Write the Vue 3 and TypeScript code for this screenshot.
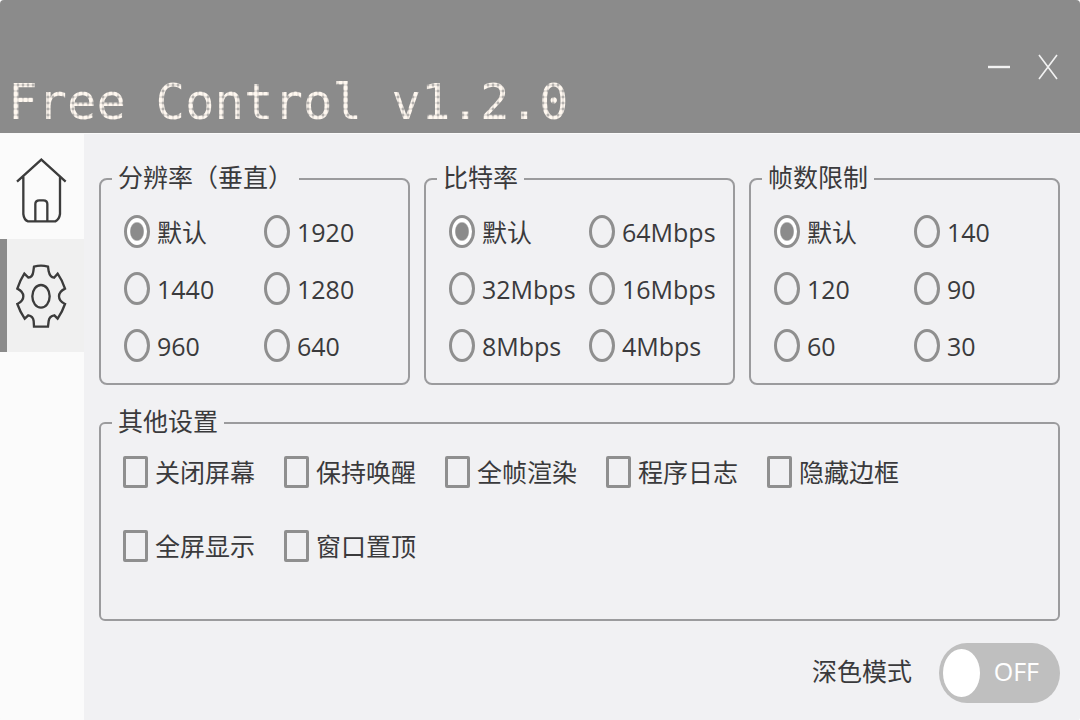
<script setup lang="ts">
import { reactive, ref } from 'vue'

interface Group {
  id: string
  title: string
  options: string[]
}

const groups: Group[] = [
  { id: 'resolution', title: '分辨率（垂直）', options: ['默认', '1920', '1440', '1280', '960', '640'] },
  { id: 'bitrate', title: '比特率', options: ['默认', '64Mbps', '32Mbps', '16Mbps', '8Mbps', '4Mbps'] },
  { id: 'fps', title: '帧数限制', options: ['默认', '140', '120', '90', '60', '30'] },
]
const selected = reactive<Record<string, string>>({ resolution: '默认', bitrate: '默认', fps: '默认' })

const others = ['关闭屏幕', '保持唤醒', '全帧渲染', '程序日志', '隐藏边框', '全屏显示', '窗口置顶']
const enabled = ref<string[]>([])
const dark = ref(false)
</script>

<template>
  <div class="window">
    <header class="titlebar">
      <h1 class="title">Free Control v1.2.0</h1>
      <div class="controls">
        <button type="button" aria-label="最小化">
          <svg width="24" height="28" viewBox="0 0 24 28"><path d="M1 14H23" stroke-width="2.4" /></svg>
        </button>
        <button type="button" aria-label="关闭">
          <svg width="24" height="28" viewBox="0 0 24 28"><path d="M3 2L21 26M21 2L3 26" stroke-width="1.6" /></svg>
        </button>
      </div>
    </header>
    <div class="body">
      <nav class="sidebar">
        <button type="button" class="nav home" aria-label="主页">
          <svg width="52" height="67" viewBox="45 65 156 201">
            <path d="M51 139L124 73L197 139M70 124V236Q72 254 84 258H166Q178 252 180 236V124M106 257V206Q106 195 118 195H130Q142 195 142 206V257" />
          </svg>
        </button>
        <button type="button" class="nav active" aria-label="设置" aria-current="page">
          <svg width="52" height="67" viewBox="46 386 156 201">
            <path d="M103 397Q124 391 145 397L147 411Q151 429 163 430L174 418Q188 438 196 463Q178 472 178 486Q178 501 196 509Q188 532 174 553L164 543Q149 545 147 560L145 577H103L102 560Q100 545 86 543L75 553Q61 532 53 509Q71 501 71 486Q71 472 53 463Q61 438 74 418L86 430Q99 429 101 411Z" />
            <ellipse cx="124" cy="486" rx="26" ry="34" />
          </svg>
        </button>
      </nav>
      <main class="content">
        <div class="groups">
          <fieldset v-for="g in groups" :key="g.id" class="group">
            <legend>{{ g.title }}</legend>
            <div class="radios">
              <label v-for="o in g.options" :key="o" class="choice">
                <input v-model="selected[g.id]" type="radio" :name="g.id" :value="o" />
                <span>{{ o }}</span>
              </label>
            </div>
          </fieldset>
        </div>
        <fieldset class="group other">
          <legend>其他设置</legend>
          <div class="checks">
            <label v-for="o in others" :key="o" class="choice">
              <input v-model="enabled" type="checkbox" :value="o" />
              <span>{{ o }}</span>
            </label>
          </div>
        </fieldset>
        <div class="mode">
          <label for="dark" class="mode-label">深色模式</label>
          <label class="switch" :class="{ on: dark }">
            <input id="dark" v-model="dark" type="checkbox" role="switch" />
            <span class="state">{{ dark ? 'ON' : 'OFF' }}</span>
          </label>
        </div>
      </main>
    </div>
  </div>
</template>

<style>
body {
  margin: 0;
  background: #fff;
}
</style>

<style scoped>
.window {
  min-height: 100vh;
  display: flex;
  flex-direction: column;
  overflow: hidden;
  border-radius: 4px;
  background: #f1f1f3;
  color: #3a3a3c;
  font-family: 'Open Sans', 'Noto Sans CJK SC', sans-serif;
  font-size: 25px;
  line-height: 36px;
}
button {
  border: 0;
  padding: 0;
  background: none;
  font: inherit;
}
svg {
  display: block;
  fill: none;
}
.titlebar {
  height: 133px;
  box-sizing: border-box;
  padding: 0 20px 0 8px;
  display: flex;
  justify-content: space-between;
  align-items: center;
  background: #8b8b8b;
}
.title {
  margin: 0;
  align-self: flex-end;
  font: 400 49px/60px 'DejaVu Sans Mono', monospace;
  white-space: nowrap;
  color: transparent;
  background: radial-gradient(closest-side, #fff8f0 60%, #e6e0da 90%, #a2a09e 125%) 0 0 / 5px 6px;
  -webkit-background-clip: text;
  background-clip: text;
}
.controls {
  display: flex;
  gap: 25px;
}
.controls svg {
  stroke: #f2f2f2;
}
.body {
  flex: 1;
  display: flex;
  border-top: 1px solid #fafafa;
}
.sidebar {
  flex: none;
  width: 84px;
  background: #fbfbfb;
}
.nav {
  display: flex;
  align-items: center;
  justify-content: center;
  box-sizing: border-box;
  width: 100%;
  height: 113px;
}
.nav.home {
  height: 105px;
  padding: 8px 2px 0 0;
}
.nav.active {
  background: #f0f0f0;
  border-left: 7px solid #8b8b8b;
  padding: 2px 9px 0 0;
}
.nav svg {
  stroke: #3c3c3c;
  stroke-width: 7;
}
.content {
  flex: 1;
  min-width: 0;
  padding: 27px 20px 18px 15px;
}
.groups {
  display: grid;
  grid-template-columns: repeat(3, 1fr);
  gap: 14px;
}
.group {
  min-width: 0;
  margin: 0;
  padding: 6px 4px 9px 11px;
  border: 2px solid #9b9b9d;
  border-radius: 8px;
}
legend {
  padding: 0 6px 4px;
  line-height: 32px;
  white-space: nowrap;
}
.radios {
  display: grid;
  grid-template-columns: 1fr 1fr;
  grid-auto-rows: 57px;
  padding-left: 12px;
}
.choice {
  display: flex;
  align-items: center;
  gap: 7px;
  white-space: nowrap;
}
.choice input {
  appearance: none;
  flex: none;
  box-sizing: border-box;
  margin: 0;
  border: 3px solid #8f8f8f;
}
.choice input[type='radio'] {
  width: 26px;
  height: 33px;
  border-radius: 50%;
}
.choice input[type='radio']:checked {
  background: radial-gradient(closest-side, #8b8b8b 62%, #fff 74%);
}
.choice input[type='checkbox'] {
  width: 25px;
  height: 32px;
  border-radius: 2px;
}
.choice input[type='checkbox']:checked {
  background: #8b8b8b;
}
.other {
  margin-top: 20px;
  padding: 0 4px 42px 11px;
  border-radius: 6px;
}
.checks {
  display: grid;
  grid-template-columns: repeat(auto-fill, 161px);
  grid-auto-rows: 62px;
  row-gap: 12px;
  padding-left: 11px;
}
.mode {
  display: flex;
  justify-content: flex-end;
  align-items: center;
  gap: 27px;
  margin-top: 22px;
}
.mode-label,
.state {
  padding-bottom: 4px;
}
.switch {
  box-sizing: border-box;
  width: 121px;
  height: 60px;
  padding: 0 21px 0 4px;
  display: flex;
  align-items: center;
  justify-content: space-between;
  border-radius: 28px / 30px;
  background: #bfbfbf;
  color: #fff;
}
.switch input {
  appearance: none;
  width: 37px;
  height: 48px;
  margin: 0;
  border-radius: 50%;
  background: #fff;
}
.switch.on {
  flex-direction: row-reverse;
  padding: 0 4px 0 21px;
  background: #8b8b8b;
}
</style>
